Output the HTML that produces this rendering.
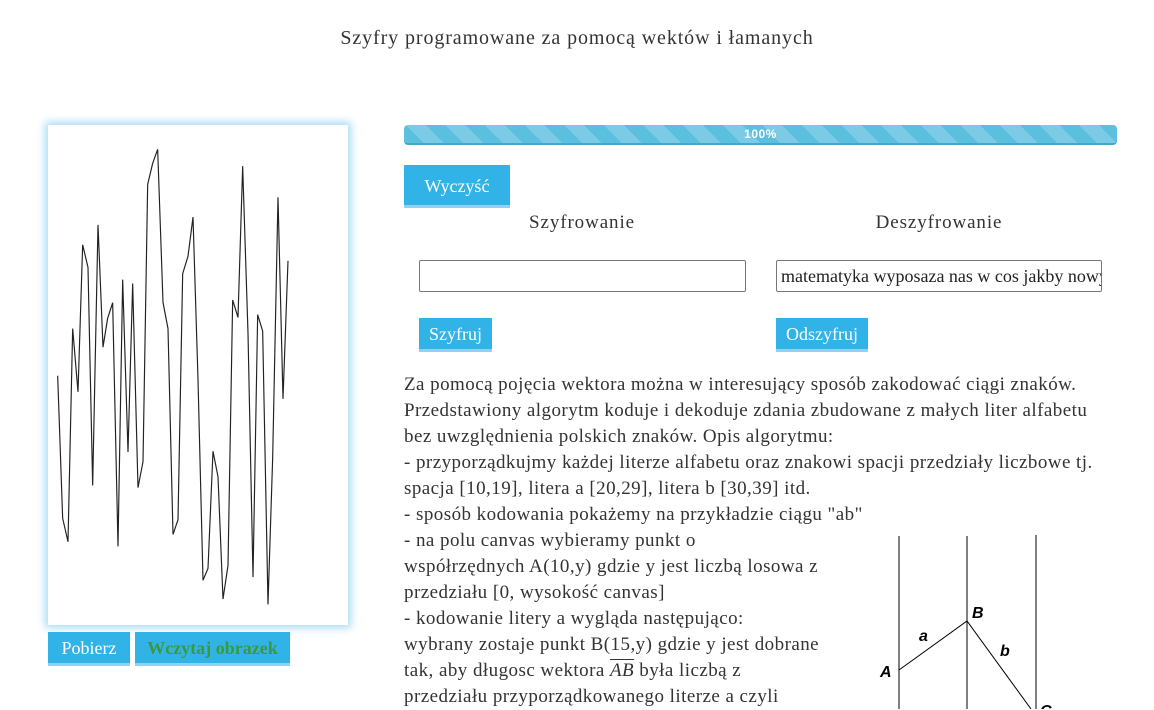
<!DOCTYPE html>
<html><head><meta charset="utf-8"><style>
*{box-sizing:border-box}
body{margin:0;width:1154px;height:709px;overflow:hidden;background:#fff;font-family:"Liberation Serif",serif;color:#333;position:relative}
.abs{position:absolute}
h1{position:absolute;top:27px;left:0;width:1154px;text-align:center;font-size:20px;font-weight:normal;margin:0;letter-spacing:.9px;color:#333}
.canvas{left:48px;top:125px;width:300px;height:500px;background:#fff;box-shadow:0 0 8px 3px #a8dcf5}
.btn{position:absolute;background:#32b3e8;color:#fff;font-size:18px;text-align:center;border-bottom:3px solid #8fd3f2}
.bar{left:404px;top:125px;width:713px;height:20px;border-radius:4px;background:repeating-linear-gradient(45deg,#5bc0de 0 14px,#7ccbe6 14px 28px);border-bottom:2px solid #46a8c8;color:#fff;font-family:"Liberation Sans",sans-serif;font-weight:bold;font-size:12px;text-align:center;line-height:18px;letter-spacing:.5px}
.lbl{font-size:19px;letter-spacing:.9px;text-align:center}
.inp{border:1px solid #777;border-radius:2px;height:32px;background:#fff;font-size:18px;line-height:30px;padding-left:4px;overflow:hidden;white-space:nowrap}
.txt{left:404px;top:372px;width:750px;font-size:19px;line-height:26px;letter-spacing:.45px;color:#333;white-space:nowrap}
</style></head><body>
<h1>Szyfry programowane za pomocą wektów i łamanych</h1>
<div class="abs canvas"></div>
<svg class="abs" style="left:40px;top:120px" width="320" height="550" viewBox="0 0 960 1574" preserveAspectRatio="none"><polyline fill="none" stroke="#222" stroke-width="3.5" points="53,732 68,1140 84,1207 98,597 114,778 128,357 144,422 158,1046 174,300 189,650 203,567 218,523 234,1220 248,457 264,950 278,468 294,1052 309,978 323,184 338,124 353,84 369,522 384,597 399,1186 414,1144 428,440 444,390 459,278 474,742 489,1317 504,1283 519,948 534,1021 549,1371 564,1275 578,515 594,565 608,132 624,610 639,1308 653,557 668,604 684,1386 698,967 714,221 729,798 744,403"/></svg>
<div class="btn" style="left:48px;top:632px;width:82px;height:34px;line-height:33px">Pobierz</div>
<div class="btn" style="left:135px;top:632px;width:155px;height:34px;line-height:33px;color:#3a9a3a;font-weight:bold">Wczytaj obrazek</div>
<div class="abs bar">100%</div>
<div class="btn" style="left:404px;top:165px;width:106px;height:43px;line-height:42px">Wyczyść</div>
<div class="abs lbl" style="left:482px;top:212px;width:200px">Szyfrowanie</div>
<div class="abs lbl" style="left:839px;top:212px;width:200px">Deszyfrowanie</div>
<div class="abs inp" style="left:419px;top:260px;width:327px"></div>
<div class="abs inp" style="left:776px;top:260px;width:326px;color:#222">matematyka wyposaza nas w cos jakby nowy</div>
<div class="btn" style="left:419px;top:318px;width:73px;height:34px;line-height:32px">Szyfruj</div>
<div class="btn" style="left:776px;top:318px;width:92px;height:34px;line-height:32px">Odszyfruj</div>
<div class="abs txt">Za pomocą pojęcia wektora można w interesujący sposób zakodować ciągi znaków.<br>Przedstawiony algorytm koduje i dekoduje zdania zbudowane z małych liter alfabetu<br>bez uwzględnienia polskich znaków. Opis algorytmu:<br>- przyporządkujmy każdej literze alfabetu oraz znakowi spacji przedziały liczbowe tj.<br>spacja [10,19], litera a [20,29], litera b [30,39] itd.<br>- sposób kodowania pokażemy na przykładzie ciągu "ab"<br>- na polu canvas wybieramy punkt o<br>współrzędnych A(10,y) gdzie y jest liczbą losowa z<br>przedziału [0, wysokość canvas]<br>- kodowanie litery a wygląda następująco:<br>wybrany zostaje punkt B(15,y) gdzie y jest dobrane<br>tak, aby długosc wektora <i style="text-decoration:overline">AB</i> była liczbą z<br>przedziału przyporządkowanego literze a czyli</div>
<svg class="abs" style="left:850px;top:520px" width="304" height="189" viewBox="0 0 304 189" font-family="Liberation Sans,sans-serif" font-weight="bold" font-style="italic" font-size="16">
<line x1="49" y1="16" x2="49" y2="189" stroke="#000"/><line x1="117" y1="16" x2="117" y2="189" stroke="#000"/><line x1="186" y1="15" x2="186" y2="189" stroke="#000"/>
<polyline points="49,150 117,101 181,189" fill="none" stroke="#000"/>
<text x="30" y="157">A</text><text x="122" y="98">B</text><text x="69" y="121">a</text><text x="150" y="136">b</text><text x="190" y="196">C</text></svg>
</body></html>
